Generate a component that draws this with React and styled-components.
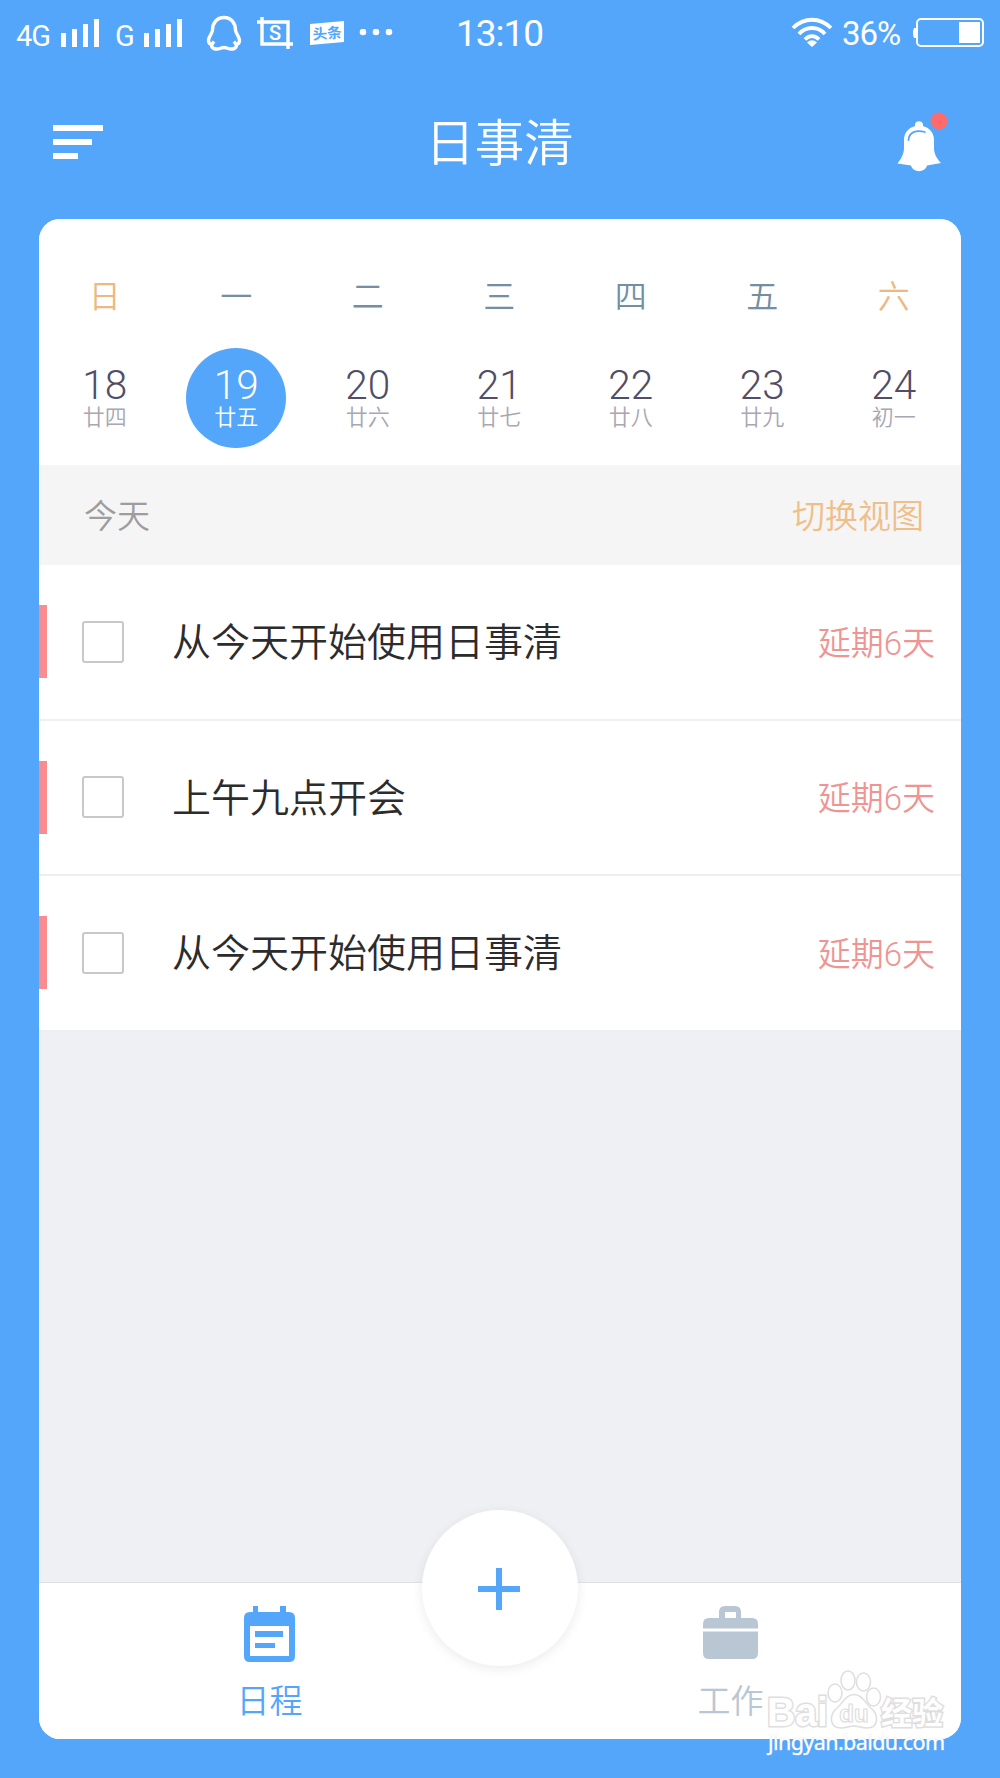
import React from "react";
import styled, { createGlobalStyle } from "styled-components";

const GlobalStyle = createGlobalStyle`
  * {
    box-sizing: border-box;
  }

  body {
    margin: 0;
    background: #54a6fb;
    font-family: Roboto, "Noto Sans CJK SC", sans-serif;
    font-weight: 350;
  }

  svg {
    display: block;
  }

  button {
    padding: 0;
    border: 0;
    background: none;
    font: inherit;
    color: inherit;
  }
`;

const Screen = styled.div`
  position: relative;
  display: flex;
  flex-direction: column;
  height: 1778px;
  padding: 0 39px 39px;
  background: #54a6fb;
  overflow: hidden;
`;

const StatusBar = styled.div`
  display: grid;
  grid-template-columns: 1fr 88px 1fr;
  align-items: center;
  height: 66px;
  margin: 0 -23px;
  color: #fff;
`;

const StatusGroup = styled.div`
  display: flex;
  align-items: center;
  height: 66px;
  justify-content: ${(props) => (props.$end ? "flex-end" : "flex-start")};
`;

const StatusText = styled.span`
  width: ${(props) => props.$width}px;
  margin-left: ${(props) => props.$left || 0}px;
  padding-top: ${(props) => props.$top || 0}px;
  font-size: ${(props) => props.$size}px;
  font-weight: 400;
  line-height: 1;
  letter-spacing: ${(props) => props.$spacing || 0}px;
  white-space: nowrap;
`;

const StatusIcon = styled.svg`
  flex: none;
  margin-left: ${(props) => props.$left}px;
`;

const Header = styled.header`
  display: grid;
  grid-template-columns: 60px 1fr 60px;
  align-items: center;
  height: 153px;
  padding: 0 7px 2px 14px;
  color: #fff;

  h1 {
    margin: 0;
    padding: 7px 8px 0 0;
    font-size: 49.5px;
    font-weight: 350;
    line-height: 1;
    text-align: center;
  }
`;

const Card = styled.main`
  display: flex;
  flex-direction: column;
  flex: 1;
  min-height: 0;
  border-radius: 21px;
  background: #eef0f4;
  overflow: hidden;
`;

const Week = styled.section`
  display: grid;
  grid-template-columns: repeat(7, 131.5px);
  height: 246px;
  padding-top: 62px;
  background: #fff;
`;

const DayColumn = styled.div`
  display: flex;
  flex-direction: column;
  align-items: center;
`;

const Weekday = styled.div`
  height: 67px;
  font-size: 32px;
  line-height: 33px;
  color: ${(props) => (props.$weekend ? "#ecb982" : "#748ea2")};
`;

const DateCircle = styled.button`
  display: flex;
  flex-direction: column;
  align-items: center;
  width: 100px;
  height: 100px;
  padding-top: 17px;
  border-radius: 50%;
  background: ${(props) => (props.$selected ? "#54a6fb" : "transparent")};
  color: ${(props) => (props.$selected ? "#fff" : "#514d66")};

  strong {
    font-size: 40.5px;
    font-weight: 300;
    line-height: 40px;
  }

  span {
    font-size: 22px;
    line-height: 26px;
    color: ${(props) => (props.$selected ? "#fff" : "#a9a7b4")};
  }
`;

const SectionBar = styled.div`
  display: flex;
  align-items: center;
  justify-content: space-between;
  height: 100px;
  padding: 0 37px 3px 45px;
  background: #f5f5f5;
  font-size: 33px;
  color: #9d9d9d;

  button {
    color: #f0be88;
  }
`;

const TaskRow = styled.div`
  display: flex;
  align-items: center;
  height: 155.5px;
  padding-right: 26px;
  border-bottom: 2px solid #eeeff0;
  background: #fff;
`;

const Marker = styled.span`
  width: 8px;
  height: 73px;
  background: #f98c8e;
`;

const Checkbox = styled.button`
  width: 42px;
  height: 42px;
  margin: 0 48px 0 35px;
  border: 2px solid #c8c8c8;
  border-radius: 3px;
`;

const TaskTitle = styled.span`
  flex: 1;
  padding-top: 3px;
  font-size: 39px;
  line-height: 50px;
  color: #2c2c2c;
`;

const Overdue = styled.span`
  padding-top: 4px;
  font-size: 33px;
  line-height: 50px;
  color: #ee9593;
`;

const TabBar = styled.nav`
  position: relative;
  display: grid;
  grid-template-columns: 1fr 1fr;
  height: 157px;
  margin-top: auto;
  border-top: 1px solid #dfe0e2;
  background: #fff;
`;

const Tab = styled.button`
  display: flex;
  flex-direction: column;
  align-items: center;
  padding-top: 23px;
  font-size: 33px;
  line-height: 36px;
  color: ${(props) => (props.$active ? "#54a6fb" : "#b9c6d3")};

  svg {
    height: 57px;
    margin-bottom: 21px;
  }
`;

const AddButton = styled.button`
  position: absolute;
  left: 383px;
  top: -73px;
  display: flex;
  align-items: center;
  justify-content: center;
  width: 156px;
  height: 156px;
  padding: 2px 2px 0 0;
  border-radius: 50%;
  background: #fff;
  box-shadow: 0 3px 12px rgba(0, 0, 0, 0.08);
`;

const Watermark = styled.svg`
  position: absolute;
  left: 760px;
  top: 1660px;
`;

const days = [
  { weekday: "日", date: 18, lunar: "廿四", weekend: true },
  { weekday: "一", date: 19, lunar: "廿五", selected: true },
  { weekday: "二", date: 20, lunar: "廿六" },
  { weekday: "三", date: 21, lunar: "廿七" },
  { weekday: "四", date: 22, lunar: "廿八" },
  { weekday: "五", date: 23, lunar: "廿九" },
  { weekday: "六", date: 24, lunar: "初一", weekend: true },
];

const tasks = [
  { id: 1, title: "从今天开始使用日事清", overdue: "延期6天" },
  { id: 2, title: "上午九点开会", overdue: "延期6天" },
  { id: 3, title: "从今天开始使用日事清", overdue: "延期6天" },
];

const Signal = ({ left }) => (
  <StatusIcon $left={left} width="39" height="28" fill="#fff">
    <rect x="0" y="14" width="5" height="14" />
    <rect x="11" y="10" width="5" height="18" />
    <rect x="22" y="5" width="5" height="23" />
    <rect x="33" y="0" width="5" height="28" />
  </StatusIcon>
);

const PhoneStatus = () => (
  <StatusBar>
    <StatusGroup>
      <StatusText $width={36} $size={29} $top={6} $spacing={-1}>
        4G
      </StatusText>
      <Signal left={9} />
      <StatusText $width={20} $size={29} $top={6} $left={15}>
        G
      </StatusText>
      <Signal left={9} />
      <StatusIcon $left={23} width="36" height="36" fill="none" stroke="#fff" strokeWidth="3.4" strokeLinejoin="round">
        <path d="M18 2.500C11 2.500 6.500 8 6.500 15C6.500 18 3 21 2.500 25C2.500 28 4 30 6.500 28.500L8 26.500M6.500 28.500C4.500 31 6 34 11 34C14 34 15 32.500 18 32.500C21 32.500 22 34 25 34C30 34 31.500 31 29.500 28.500L28 26.500M29.500 28.500C32 30 33.500 28 33.500 25C33 21 29.500 18 29.500 15C29.500 8 25 2.500 18 2.500" />
      </StatusIcon>
      <StatusIcon $left={15} width="36" height="32" fill="none" stroke="#fff" strokeWidth="3.4">
        <path d="M0 5H31V32M5 0V27H36" />
        <text x="18" y="23" fill="#fff" stroke="none" fontFamily="Roboto" fontSize="20" fontWeight="500" textAnchor="middle">
          S
        </text>
      </StatusIcon>
      <StatusIcon $left={17} width="34" height="24">
        <path d="M0 3L34 0V21L0 24Z" fill="#fff" />
        <text x="17" y="17.500" fill="#54a6fb" fontFamily="Noto Sans CJK SC" fontSize="14.500" fontWeight="700" textAnchor="middle" transform="rotate(-4 17 12)">
          头条
        </text>
      </StatusIcon>
      <StatusIcon $left={15} width="34" height="8" fill="#fff">
        <circle cx="4" cy="3" r="3.3" />
        <circle cx="17" cy="3" r="3.3" />
        <circle cx="30" cy="3" r="3.3" />
      </StatusIcon>
    </StatusGroup>
    <StatusText $width={88} $size={37} $spacing={-1}>
      13:10
    </StatusText>
    <StatusGroup $end>
      <StatusIcon $left={0} width="42" height="34" fill="none" stroke="#fff" strokeWidth="3.8">
        <path d="M2 12C13 1 29 1 40 12M8 18C15 10 27 10 34 18M14 23.500C18 19 24 19 28 23.500" />
        <path d="M16 26.500Q21 22 26 26.500L21 31Z" fill="#fff" stroke="none" />
      </StatusIcon>
      <StatusText $width={62} $size={33} $left={9} $spacing={-1}>
        36%
      </StatusText>
      <StatusIcon $left={8} width="72" height="30">
        <path d="M4 10H2Q0 15 2 20H4Z" fill="#fff" />
        <rect x="5" y="1" width="66" height="27" rx="4" fill="none" stroke="#fff" strokeWidth="2" />
        <rect x="47" y="4" width="21" height="21" fill="#fff" />
      </StatusIcon>
    </StatusGroup>
  </StatusBar>
);

const MenuIcon = () => (
  <svg width="51" height="34" fill="#fff">
    <rect width="50" height="6" />
    <rect y="14" width="39" height="6" />
    <rect y="28" width="25" height="6" />
  </svg>
);

const BellIcon = () => (
  <svg width="54" height="60" viewBox="894 112 54 60">
    <path
      fill="#fff"
      d="M915 126V124.500C915 120 923 120 923 124.500V126C930 128 934 133 934 140V148C934 154 937 159 941 163L927 165.500C925 173 913 173 911 165.500L897.500 163.500C901 159 904 154 904 148V140C904 133 908 128 915 126Z"
    />
    <path d="M908.500 140C909 132 916 129.500 925 132" fill="none" stroke="#54a6fb" strokeWidth="1.800" strokeLinecap="round" />
    <circle cx="939" cy="121" r="8.500" fill="#ff6b6b" />
  </svg>
);

const ScheduleIcon = () => (
  <svg width="51" height="57">
    <path
      fill="currentColor"
      fillRule="evenodd"
      d="M9 0H14V6H36V0H42V6H45Q51 6 51 12V50Q51 56 45 56H6Q0 56 0 50V12Q0 6 6 6H9ZM6 20V50H45V20ZM11 25H39V31H11ZM11 37H31V42H11Z"
    />
  </svg>
);

const BriefcaseIcon = () => (
  <svg width="55" height="57" fill="currentColor">
    <path fillRule="evenodd" d="M16 12V6Q16 0 22 0H32Q38 0 38 6V12H49Q55 12 55 18V22.500H0V18Q0 12 6 12ZM22 6V12H33V6Z" />
    <path d="M0 25.500H55V47Q55 53 49 53H6Q0 53 0 47Z" />
  </svg>
);

const BaiduMark = () => (
  <Watermark width="200" height="110" fill="#fff" stroke="#dedede" strokeWidth="1.500">
    <g fontFamily="Liberation Sans" fontWeight="700" paintOrder="stroke" strokeWidth="3">
      <text x="7" y="65.500" fontSize="40" textLength="61" lengthAdjust="spacingAndGlyphs">
        Bai
      </text>
      <text x="121" y="64" fontFamily="Noto Sans CJK SC" fontSize="31" fontWeight="700">
        经验
      </text>
    </g>
    <ellipse cx="75" cy="33" rx="7" ry="9" />
    <ellipse cx="88" cy="20.500" rx="7" ry="9.500" />
    <ellipse cx="103.500" cy="22" rx="7" ry="9" />
    <ellipse cx="113.500" cy="37" rx="7" ry="9" />
    <path d="M94 34.500C102 34.500 105 43 111 48C119 55 119 68 107 68C101 68 98 66 94 66C90 66 87 68 81 68C69 68 69 55 77 48C83 43 86 34.500 94 34.500Z" />
    <text x="94" y="62" fontFamily="Liberation Sans" fontSize="24" fontWeight="700" textAnchor="middle" strokeWidth="1.200">
      du
    </text>
    <text x="8" y="90" fontFamily="Noto Sans" fontSize="21.500" fontWeight="400" stroke="#d5dee8" strokeWidth="0.500" paintOrder="stroke" textLength="177" lengthAdjust="spacing">
      jingyan.baidu.com
    </text>
  </Watermark>
);

const App = () => {
  return (
    <Screen>
      <GlobalStyle />
      <PhoneStatus />

      <Header>
        <MenuIcon />
        <h1>日事清</h1>
        <BellIcon />
      </Header>

      <Card>
        <Week>
          {days.map((day) => (
            <DayColumn key={day.date}>
              <Weekday $weekend={day.weekend}>{day.weekday}</Weekday>
              <DateCircle $selected={day.selected}>
                <strong>{day.date}</strong>
                <span>{day.lunar}</span>
              </DateCircle>
            </DayColumn>
          ))}
        </Week>

        <SectionBar>
          <span>今天</span>
          <button>切换视图</button>
        </SectionBar>

        {tasks.map((task) => (
          <TaskRow key={task.id}>
            <Marker />
            <Checkbox aria-label={task.title} />
            <TaskTitle>{task.title}</TaskTitle>
            <Overdue>{task.overdue}</Overdue>
          </TaskRow>
        ))}

        <TabBar>
          <Tab $active>
            <ScheduleIcon />
            日程
          </Tab>
          <Tab>
            <BriefcaseIcon />
            工作
          </Tab>
          <AddButton aria-label="add">
            <svg width="42" height="42" fill="none" stroke="#54a6fb" strokeWidth="6">
              <path d="M21 0V42M0 21H42" />
            </svg>
          </AddButton>
        </TabBar>
      </Card>

      <BaiduMark />
    </Screen>
  );
};

export default App;
